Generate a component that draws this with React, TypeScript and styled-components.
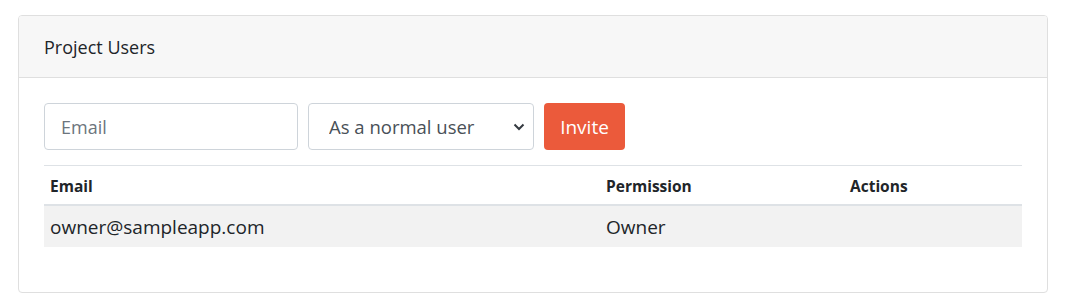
import React from 'react';
import styled, { createGlobalStyle } from 'styled-components';

const GlobalStyle = createGlobalStyle`
	body {
		margin: 0;
		background: #fff;
		font-family: 'Open Sans', 'Noto Sans', Arial, sans-serif;
		color: #212529;
	}
`;

const Page = styled.div`
	padding: 15px 19px 14px 18px;
`;

const Card = styled.section`
	border: 1px solid #dfdfdf;
	border-radius: 4px;
	background: #fff;
	overflow: hidden;
`;

const CardHeader = styled.header`
	background: #f7f7f7;
	border-bottom: 1px solid #dfdfdf;
	padding: 0 25px;
	height: 61px;
	display: flex;
	align-items: center;
	font-size: 18px;
	color: #212529;
`;

const CardBody = styled.div`
	padding: 25px 25px 45px;
`;

const InviteForm = styled.form`
	display: flex;
	gap: 10px;
	margin-bottom: 15px;
`;

const TextInput = styled.input`
	box-sizing: border-box;
	width: 254px;
	height: 47px;
	padding: 0 16px;
	border: 1px solid #ced4da;
	border-radius: 4px;
	font: inherit;
	font-size: 18px;
	color: #495057;
	outline: none;

	&::placeholder {
		color: #6c757d;
	}
`;

const SelectWrap = styled.div`
	position: relative;
	width: 226px;
	height: 47px;
`;

const Select = styled.select`
	box-sizing: border-box;
	appearance: none;
	width: 100%;
	height: 100%;
	padding: 0 30px 0 20px;
	border: 1px solid #ced4da;
	border-radius: 4px;
	background: #fff;
	font: inherit;
	font-size: 18.5px;
	color: #495057;
	outline: none;
`;

const Chevron = styled.svg`
	position: absolute;
	right: 9px;
	top: 20px;
	pointer-events: none;
`;

const InviteButton = styled.button`
	box-sizing: border-box;
	width: 81px;
	height: 47px;
	border: none;
	border-radius: 4px;
	background: #eb5a3b;
	color: #fff;
	font: inherit;
	font-size: 19px;
	cursor: pointer;
`;

const Table = styled.table`
	width: 100%;
	border-collapse: collapse;
	table-layout: fixed;
`;

const HeadCell = styled.th<{ $width?: string }>`
	box-sizing: border-box;
	width: ${(p) => p.$width ?? 'auto'};
	text-align: left;
	font-weight: 700;
	font-size: 15.5px;
	padding: 9px 6px 7px;
	border-top: 1px solid #dee2e6;
	border-bottom: 2px solid #dee2e6;
`;

const Row = styled.tr<{ $striped?: boolean }>`
	background: ${(p) => (p.$striped ? '#f2f2f2' : '#fff')};
`;

const Cell = styled.td`
	font-size: 19px;
	padding: 0 6px;
	height: 41px;
`;

const users = [{ email: 'owner@sampleapp.com', permission: 'Owner' }];

export default function App() {
	return (
		<Page>
			<GlobalStyle />
			<Card>
				<CardHeader>Project Users</CardHeader>
				<CardBody>
					<InviteForm onSubmit={(e) => e.preventDefault()}>
						<TextInput type="email" placeholder="Email" />
						<SelectWrap>
							<Select defaultValue="normal">
								<option value="normal">As a normal user</option>
								<option value="admin">As an admin</option>
							</Select>
							<Chevron width="12" height="8" viewBox="0 0 12 8">
								<path d="M1.5 1.5 6 6l4.5-4.5" fill="none" stroke="#343a40" strokeWidth="2" />
							</Chevron>
						</SelectWrap>
						<InviteButton type="submit">Invite</InviteButton>
					</InviteForm>
					<Table>
						<thead>
							<tr>
								<HeadCell $width="556px">Email</HeadCell>
								<HeadCell $width="244px">Permission</HeadCell>
								<HeadCell>Actions</HeadCell>
							</tr>
						</thead>
						<tbody>
							{users.map((u, i) => (
								<Row key={u.email} $striped={i % 2 === 0}>
									<Cell>{u.email}</Cell>
									<Cell>{u.permission}</Cell>
									<Cell />
								</Row>
							))}
						</tbody>
					</Table>
				</CardBody>
			</Card>
		</Page>
	);
}
